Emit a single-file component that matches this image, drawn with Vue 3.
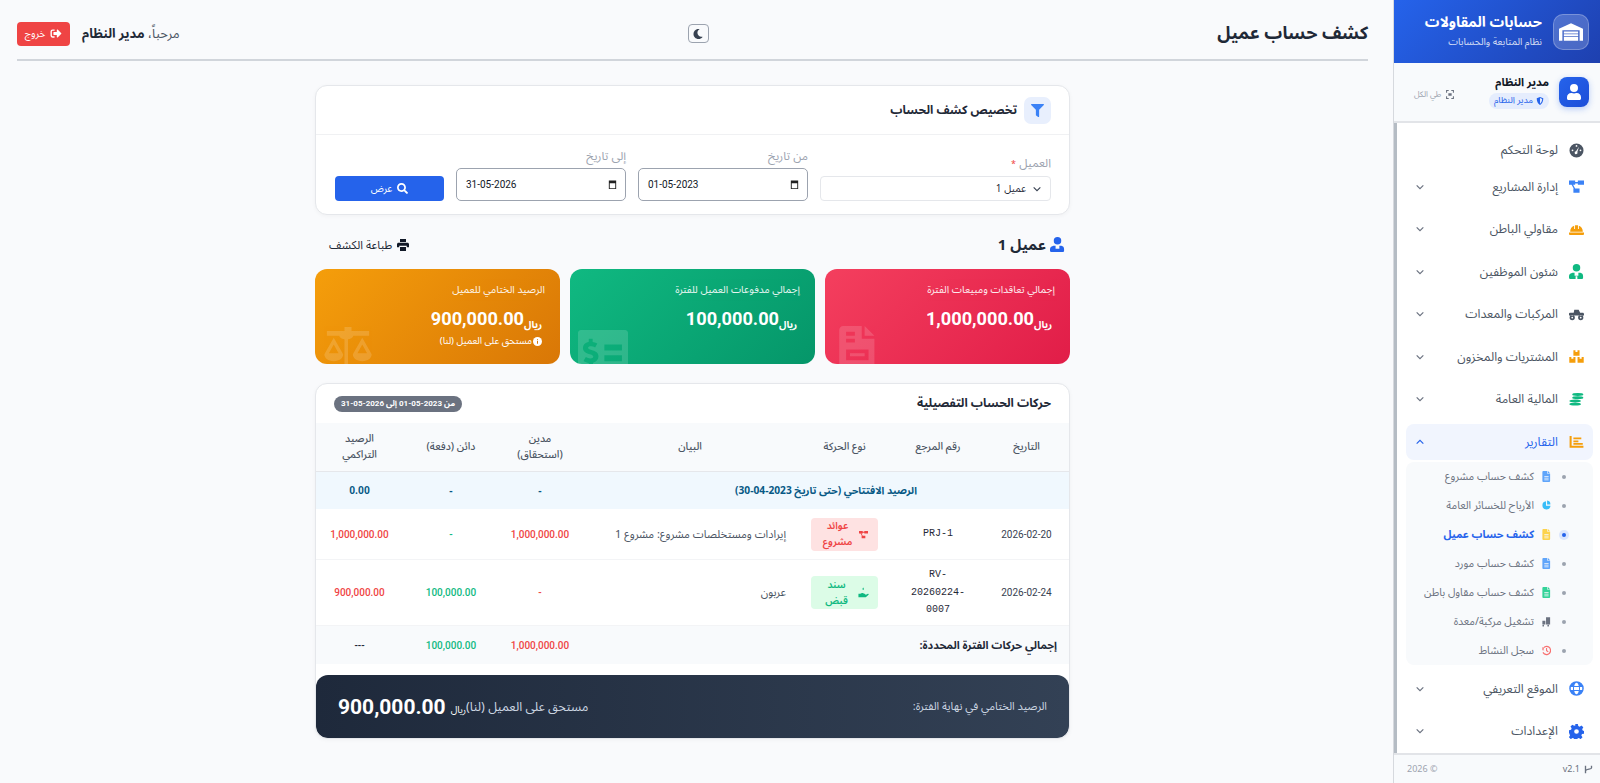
<template>
  <div class="layout">
    <aside class="sidebar">
      <div class="brand">
        <div class="brand-logo">
          <svg viewBox="0 0 640 512" width="24" height="20"><path :d="icons.warehouse" fill="#fff" fill-rule="evenodd" /></svg>
        </div>
        <div class="brand-text">
          <div class="brand-name">حسابات المقاولات</div>
          <div class="brand-sub">نظام المتابعة والحسابات</div>
        </div>
      </div>

      <div class="user-box">
        <div class="avatar">
          <svg viewBox="0 0 448 512" width="14" height="16"><path :d="icons.user" fill="#fff" /></svg>
        </div>
        <div class="user-info">
          <div class="user-name">مدير النظام</div>
          <div class="user-role">
            <svg viewBox="0 0 512 512" width="8" height="8"><path :d="icons.shield" fill="#2563eb" fill-rule="evenodd" /></svg>
            مدير النظام
          </div>
        </div>
        <div class="collapse-all">
          <svg viewBox="0 0 448 512" width="8" height="9"><path :d="icons.compress" fill="#6b7280" /></svg>
          طي الكل
        </div>
      </div>

      <nav class="nav">
        <template v-for="item in navItems" :key="item.label">
          <div class="nav-item" :class="{ active: item.open, plain: !item.arrow }">
            <svg class="nav-icon" viewBox="0 0 512 512"><path :d="icons[item.icon]" :fill="item.color" fill-rule="evenodd" /></svg>
            <span class="nav-label">{{ item.label }}</span>
            <svg v-if="item.arrow" class="nav-arrow" viewBox="0 0 12 12"><path :d="item.open ? 'M2 8l4-4 4 4' : 'M2 4l4 4 4-4'" fill="none" stroke="currentColor" stroke-width="1.4" /></svg>
          </div>
          <div v-if="item.open" class="sub-nav">
            <div v-for="sub in subItems" :key="sub.label" class="sub-item" :class="{ current: sub.current }">
              <span class="sub-dot"></span>
              <svg class="sub-icon" viewBox="0 0 384 512"><path :d="icons[sub.icon]" :fill="sub.color" fill-rule="evenodd" /></svg>
              <span>{{ sub.label }}</span>
            </div>
          </div>
        </template>
      </nav>

      <div class="side-foot">
        <span class="version">
          <svg viewBox="0 0 12 12" width="9" height="9"><path d="M2 1v10M10 1v3c0 2-8 1-8 4" fill="none" stroke="#6b7280" stroke-width="1.8" /></svg>
          v2.1
        </span>
        <span class="copy">© 2026</span>
      </div>
    </aside>

    <main class="main">
      <header class="topbar">
        <h1 class="page-title">كشف حساب عميل</h1>
        <button class="theme-btn">
          <svg viewBox="0 0 512 512" width="10" height="10"><path d="M283 512c79 0 151-36 199-95 7-9-1-22-12-20-127 24-244-73-244-202 0-74 40-142 104-179 10-6 8-21-4-23C180-30 24 100 24 256c0 141 115 256 259 256z" fill="#374151" /></svg>
        </button>
        <div class="welcome">
          <span>مرحباً، <b>مدير النظام</b></span>
          <button class="logout">
            <svg viewBox="0 0 512 512" width="12" height="11"><path d="M502 273L335 440c-15 15-41 4-41-17v-95H159c-13 0-24-11-24-24v-96c0-13 11-24 24-24h135V89c0-21 26-32 41-17l167 167c9 10 9 24 0 34zM192 436v-40c0-7-5-12-12-12H96c-18 0-32-14-32-32V160c0-18 14-32 32-32h84c7 0 12-5 12-12V76c0-7-5-12-12-12H96C43 64 0 107 0 160v192c0 53 43 96 96 96h84c7 0 12-5 12-12z" fill="#fff" /></svg>
            خروج
          </button>
        </div>
      </header>

      <div class="content">
        <section class="card filter-card">
          <div class="filter-head">
            <span class="filter-icon">
              <svg viewBox="0 0 512 512" width="13" height="13"><path d="M488 0H24C3 0-8 26 7 41l185 185v206c0 8 4 15 10 20l80 56c16 11 38 0 38-20V226L505 41c15-15 4-41-17-41z" fill="#3b82f6" /></svg>
            </span>
            <span class="filter-title">تخصيص كشف الحساب</span>
          </div>
          <div class="filter-body">
            <div class="field client-field">
              <label>العميل <i>*</i></label>
              <div class="select-box">
                <span>عميل 1</span>
                <svg viewBox="0 0 12 12" width="10" height="10"><path d="M2 4l4 4 4-4" fill="none" stroke="#374151" stroke-width="1.3" /></svg>
              </div>
            </div>
            <div v-for="d in dateFields" :key="d.label" class="field date-field">
              <label>{{ d.label }}</label>
              <div class="date-box">
                <svg viewBox="0 0 12 12" width="11" height="11"><path d="M2 1.5h8v9.500H2zM3 4.500v5.500h6V4.500z" fill="#222" fill-rule="evenodd" /></svg>
                <span>{{ d.value }}</span>
              </div>
            </div>
            <button class="show-btn">
              <svg viewBox="0 0 512 512" width="11" height="11"><path d="M505 443L405 343c-4-4-11-7-17-7h-16c28-35 44-80 44-128C416 93 323 0 208 0S0 93 0 208s93 208 208 208c48 0 93-16 128-44v16c0 6 3 13 7 17l100 100c9 9 24 9 34 0l28-28c9-10 9-25 0-34zM208 336c-71 0-128-57-128-128S137 80 208 80s128 57 128 128-57 128-128 128z" fill="#fff" /></svg>
              عرض
            </button>
          </div>
        </section>

        <div class="client-row">
          <div class="client-name">
            <svg viewBox="0 0 512 512" width="15" height="15"><path :d="icons.tie" fill="#2563eb" /></svg>
            عميل 1
          </div>
          <div class="print-btn">
            <svg viewBox="0 0 512 512" width="12" height="12"><path d="M128 0h256v128H128zM64 160h384c35 0 64 29 64 64v128h-96v-64H96v64H0V224c0-35 29-64 64-64zM128 336h256v176H128z" fill="#111827" /></svg>
            طباعة الكشف
          </div>
        </div>

        <div class="stats">
          <div v-for="s in stats" :key="s.title" class="stat" :class="s.cls">
            <div class="stat-title">{{ s.title }}</div>
            <div class="stat-value"><small>ريال</small>{{ s.value }}</div>
            <div v-if="s.note" class="stat-note">
              <svg viewBox="0 0 12 12" width="9" height="9"><circle cx="6" cy="6" r="6" fill="#fff" /><path d="M6 5v4M6 3v1" stroke="#d97706" stroke-width="1.4" /></svg>
              {{ s.note }}
            </div>
            <svg class="stat-bg" :viewBox="s.box"><path :d="icons[s.icon]" fill="#fff" fill-rule="evenodd" /></svg>
          </div>
        </div>

        <section class="card table-card">
          <div class="table-head">
            <span class="table-title">حركات الحساب التفصيلية</span>
            <span class="range-badge">من 2023-05-01 إلى 2026-05-31</span>
          </div>
          <table class="ledger">
            <colgroup>
              <col v-for="(w, i) in colWidths" :key="i" :style="{ width: w + 'px' }" />
            </colgroup>
            <thead>
              <tr>
                <th>التاريخ</th>
                <th>رقم المرجع</th>
                <th>نوع الحركة</th>
                <th>البيان</th>
                <th>مدين<br />(استحقاق)</th>
                <th>دائن (دفعة)</th>
                <th>الرصيد<br />التراكمي</th>
              </tr>
            </thead>
            <tbody>
              <tr class="opening">
                <td colspan="4">الرصيد الافتتاحي (حتى تاريخ 2023-04-30)</td>
                <td>-</td>
                <td>-</td>
                <td class="open-balance">0.00</td>
              </tr>
              <tr>
                <td class="date">2026-02-20</td>
                <td class="ref">PRJ-1</td>
                <td>
                  <span class="type-badge red">
                    <svg viewBox="0 0 512 512" width="9" height="9"><path :d="icons.diagram" fill="#ef4444" /></svg>
                    <span>عوائد مشروع</span>
                  </span>
                </td>
                <td class="desc">إيرادات ومستخلصات مشروع: مشروع 1</td>
                <td class="num red-text">1,000,000.00</td>
                <td class="num green-text">-</td>
                <td class="num red-text">1,000,000.00</td>
              </tr>
              <tr class="tall">
                <td class="date">2026-02-24</td>
                <td class="ref">RV-<br />20260224-<br />0007</td>
                <td>
                  <span class="type-badge green">
                    <svg viewBox="0 0 512 512" width="11" height="11"><path :d="icons.hand" fill="#10b981" /></svg>
                    <span>سند قبض</span>
                  </span>
                </td>
                <td class="desc">عربون</td>
                <td class="num red-text">-</td>
                <td class="num green-text">100,000.00</td>
                <td class="num red-text">900,000.00</td>
              </tr>
              <tr class="totals">
                <td colspan="4">إجمالي حركات الفترة المحددة:</td>
                <td class="num red-text">1,000,000.00</td>
                <td class="num green-text">100,000.00</td>
                <td class="num dark">---</td>
              </tr>
            </tbody>
          </table>
          <div class="closing">
            <span class="closing-label">الرصيد الختامي في نهاية الفترة:</span>
            <div class="closing-right">
              <span class="closing-note">مستحق على العميل (لنا)</span>
              <small>ريال</small>
              <b>900,000.00</b>
            </div>
          </div>
        </section>
      </div>
    </main>
  </div>
</template>

<script setup>
// Hand-drawn approximations of the icons in the screenshot
const icons = {
  warehouse:
    "M0 170L320 20l320 150v320h-90V210H90v280H0zM130 240h380v55H130zM130 315h380v55H130zM130 390h380v100H130z",
  user: "M224 256a128 128 0 100-256 128 128 0 000 256zM314 288h-17c-22 10-47 16-73 16s-51-6-73-16h-17C60 288 0 348 0 422v42c0 26 22 48 48 48h352c26 0 48-22 48-48v-42c0-74-60-134-134-134z",
  shield: "M256 0l210 85c0 180-60 340-210 427C106 425 46 265 46 85zM256 70v360c90-70 130-170 136-295z",
  compress: "M0 0h150v60H60v90H0zM298 0h150v150h-60V60h-90zM0 512h150v-60H60v-90H0zM298 512h150V362h-60v90h-90zM130 180h188v152H130z",
  gauge:
    "M256 16a240 240 0 110 480 240 240 0 010-480zM256 70a30 30 0 100 60 30 30 0 000-60zM120 220a30 30 0 100 60 30 30 0 000-60zM392 220a30 30 0 100 60 30 30 0 000-60zM340 130L240 280a50 50 0 1045 25z",
  diagram: "M0 50h210v150H0zM302 50h210v150H302zM150 320h210v150H150zM210 100h92v50h-92zM90 200h50l70 120h-50z",
  hat: "M40 330c0-110 60-180 136-200v110h30V110h100v130h30V130c76 20 136 90 136 200zM0 360h512v50c0 20-15 30-30 30H30c-15 0-30-10-30-30z",
  tie: "M256 256a128 128 0 100-256 128 128 0 000 256zM120 300h70v100h130V300h70c55 10 90 50 90 110v70c0 18-14 32-32 32H32c-18 0-32-14-32-32v-70c0-60 65-100 120-110zM225 420h60v92h-60z",
  truck:
    "M180 90h150l50 110h90c20 0 42 20 42 50v40H0v-50c0-30 20-40 50-40h110zM110 270a90 90 0 110 180 90 90 0 010-180zM110 330a30 30 0 100 60 30 30 0 000-60zM400 270a90 90 0 110 180 90 90 0 010-180zM400 330a30 30 0 100 60 30 30 0 000-60z",
  boxes:
    "M150 40h70v60h70V40h70v190H150zM10 270h70v60h70v-60h70v200H10zM292 270h70v60h70v-60h70v200H292z",
  coins:
    "M110 85a190 50 0 10380 0a190 50 0 10-380 0zM110 195a190 50 0 10380 0a190 50 0 10-380 0zM10 305a200 50 0 10400 0a200 50 0 10-400 0zM10 415a200 50 0 10400 0a200 50 0 10-400 0z",
  report: "M20 70h70v330h402v70H20zM150 120h270v60H150zM150 220h170v60H150zM150 310h320v60H150z",
  globe:
    "M256 8a248 248 0 110 496 248 248 0 010-496zM180 170h152c-10-60-40-110-76-110s-66 50-76 110zM170 256c0 20 1 40 3 55h166c2-15 3-35 3-55s-1-30-3-50H173c-2 20-3 30-3 50zM180 342c10 60 40 110 76 110s66-50 76-110zM65 206c-3 15-5 30-5 50s2 40 5 55h75c-2-15-3-35-3-55s1-35 3-50zM372 206c2 15 3 30 3 50s-1 40-3 55h75c3-15 5-35 5-55s-2-35-5-50z",
  gear:
    "M210 0h92l14 70 48 20 60-40 65 65-40 60 20 48 43 15v92l-70 14-20 48 40 60-65 65-60-40-48 20-14 70h-92l-14-70-48-20-60 40-65-65 40-60-20-48L0 302v-92l70-14 20-48-40-60 65-65 60 40 48-20zM256 176a80 80 0 100 160 80 80 0 000-160z",
  hand: "M240 20c40 30 30 60 30 90s-50 40-60 0c-5-30 10-60 30-90zM20 310h90c40-30 90-40 130-20l90 30c30 15 15 60-20 50l-60-15 120 10 90-50c30-15 55 20 30 45l-100 90c-20 15-40 30-80 30H20z",
  doc: "M40 0h190v130h130v340c0 24-18 42-40 42H40c-22 0-40-18-40-42V42C0 18 18 0 40 0zM260 0l100 100H260zM90 230h200v40H90zM90 310h200v40H90zM90 390h200v40H90z",
  dollarDoc:
    "M30 40h452c16 0 30 14 30 30v372c0 16-14 30-30 30H30c-16 0-30-14-30-30V70c0-16 14-30 30-30zM110 130v32c-40 8-60 34-60 64 0 40 40 56 70 64 30 8 36 16 36 26s-14 16-30 16-30-6-46-14l-24 40c20 12 34 18 54 20v32h44v-34c36-8 56-34 56-66 0-40-36-54-70-64-26-8-36-14-36-24 0-8 10-14 28-14 16 0 28 4 44 12l22-40c-16-10-30-14-48-16v-34zM270 190h180v60H270zM270 300h180v60H270z",
  scale:
    "M220 10h72v40h180v50H310c-6 20-20 30-54 36v316H220V136c-34-6-48-16-54-36H40V50h180zM110 120l96 170c0 40-40 70-96 70S14 330 14 290zM110 190l-50 90h100zM402 120l96 170c0 40-40 70-96 70s-96-30-96-70zM402 190l-50 90h100z",
  invoice:
    "M40 0h190v130h130v340c0 24-18 42-40 42H40c-22 0-40-18-40-42V42C0 18 18 0 40 0zM260 0l100 100H260zM70 60v40h90V60zM70 130v40h90v-40zM70 240v110h230V240zM110 280h150v30H110zM200 400v40h90v-40z",
  pie: "M170 60v210h210a190 190 0 11-210-210zM220 20a170 170 0 01150 190H220z",
  truckSmall: "M170 60h190v340H170zM0 220h140v180H0zM40 410a40 40 0 110 80 40 40 0 010-80zM270 410a40 40 0 110 80 40 40 0 010-80z",
  history: "M192 40a216 216 0 11-190 320l50-30a160 160 0 10-10-130l50 50H0V90l40 40A215 215 0 01192 40zM170 140h50v110l70 50-30 40-90-65z",
};

const navItems = [
  { label: "لوحة التحكم", icon: "gauge", color: "#4b5563" },
  { label: "إدارة المشاريع", icon: "diagram", color: "#3b82f6", arrow: true },
  { label: "مقاولي الباطن", icon: "hat", color: "#f59e0b", arrow: true },
  { label: "شئون الموظفين", icon: "tie", color: "#10b981", arrow: true },
  { label: "المركبات والمعدات", icon: "truck", color: "#4b5563", arrow: true },
  { label: "المشتريات والمخزون", icon: "boxes", color: "#f59e0b", arrow: true },
  { label: "المالية العامة", icon: "coins", color: "#10b981", arrow: true },
  { label: "التقارير", icon: "report", color: "#f59e0b", arrow: true, open: true },
  { label: "الموقع التعريفي", icon: "globe", color: "#3b82f6", arrow: true },
  { label: "الإعدادات", icon: "gear", color: "#2563eb", arrow: true },
];

const subItems = [
  { label: "كشف حساب مشروع", icon: "doc", color: "#60a5fa" },
  { label: "الأرباح للخسائر العامة", icon: "pie", color: "#38bdf8" },
  { label: "كشف حساب عميل", icon: "doc", color: "#fcd34d", current: true },
  { label: "كشف حساب مورد", icon: "doc", color: "#60a5fa" },
  { label: "كشف حساب مقاول باطن", icon: "doc", color: "#34d399" },
  { label: "تشغيل مركبة/معدة", icon: "truckSmall", color: "#6b7280" },
  { label: "سجل النشاط", icon: "history", color: "#f87171" },
];

const dateFields = [
  { label: "من تاريخ", value: "01-05-2023" },
  { label: "إلى تاريخ", value: "31-05-2026" },
];

const stats = [
  { title: "إجمالي تعاقدات ومبيعات الفترة", value: "1,000,000.00", cls: "rose", icon: "invoice", box: "0 0 384 512" },
  { title: "إجمالي مدفوعات العميل للفترة", value: "100,000.00", cls: "emerald", icon: "dollarDoc", box: "0 0 512 512" },
  { title: "الرصيد الختامي للعميل", value: "900,000.00", cls: "amber", icon: "scale", box: "0 0 512 512", note: "مستحق على العميل (لنا)" },
];

const colWidths = [85, 92, 95, 214, 86, 92, 91];
</script>

<style>
html,
body {
  margin: 0;
  background: #f8fafc;
}
</style>

<style scoped>
.layout {
  direction: rtl;
  display: flex;
  height: 783px;
  overflow: hidden;
  background: #f9fafc;
  font-family: "Noto Sans Arabic", Inter, "DejaVu Sans", sans-serif;
  color: #1f2937;
}

/* sidebar */
.sidebar {
  width: 207px;
  flex: none;
  display: flex;
  flex-direction: column;
  background: #fff;
  border-left: 1px solid #d6d9de;
  box-sizing: border-box;
}
.brand {
  height: 63px;
  flex: none;
  box-sizing: border-box;
  display: flex;
  align-items: center;
  gap: 11px;
  padding: 0 11px;
  background: linear-gradient(135deg, #2563eb, #1e40af);
  color: #fff;
}
.brand-logo {
  width: 36px;
  height: 36px;
  border-radius: 10px;
  background: rgba(255, 255, 255, 0.2);
  border: 1px solid rgba(255, 255, 255, 0.25);
  box-sizing: border-box;
  display: flex;
  align-items: center;
  justify-content: center;
}
.brand-name {
  font-size: 14.5px;
  font-weight: 700;
  line-height: 20px;
}
.brand-sub {
  font-size: 9.8px;
  opacity: 0.8;
  line-height: 16px;
  margin-top: 1px;
}
.user-box {
  height: 60px;
  flex: none;
  box-sizing: border-box;
  display: flex;
  align-items: center;
  gap: 10px;
  padding: 0 11px;
  background: #f8fafc;
  border-bottom: 2px solid #e2e4e8;
}
.avatar {
  width: 30px;
  height: 30px;
  border-radius: 8px;
  background: linear-gradient(135deg, #2563eb, #1d4ed8);
  box-shadow: 0 2px 6px rgba(37, 99, 235, 0.3);
  display: flex;
  align-items: center;
  justify-content: center;
}
.user-name {
  font-size: 11.2px;
  font-weight: 700;
  color: #111827;
  line-height: 15px;
}
.user-role {
  margin-top: 3px;
  display: flex;
  width: fit-content;
  align-items: center;
  gap: 3px;
  padding: 1px 5px;
  border-radius: 10px;
  background: #e5edfd;
  color: #2563eb;
  font-size: 9px;
  line-height: 14px;
}
.collapse-all {
  margin-right: auto;
  margin-left: 9px;
  margin-top: 5px;
  display: flex;
  align-items: center;
  gap: 5px;
  font-size: 8px;
  color: #9ca3af;
}
.nav {
  flex: 1;
  padding: 12px 7px 0 9px;
  border-left: 3px solid #b5bcc4;
  min-height: 0;
  overflow: hidden;
}
.nav-item {
  height: 35.5px;
  margin-bottom: 7px;
  display: flex;
  align-items: center;
  gap: 11px;
  padding: 0 9px;
  font-size: 12.3px;
  color: #4b5563;
  border-radius: 8px;
  box-sizing: border-box;
}
.nav-item.plain {
  height: 30px;
  margin-bottom: 4px;
}
.nav-item.active {
  background: #f1f5fe;
  color: #2563eb;
  margin-bottom: 2.5px;
}
.nav-icon {
  width: 15px;
  height: 15px;
  flex: none;
}
.nav-arrow {
  margin-right: auto;
  width: 10px;
  height: 10px;
  color: #6b7280;
}
.nav-item.active .nav-arrow {
  color: #2563eb;
}
.sub-nav {
  background: #f8fafc;
  border-radius: 8px;
  margin-bottom: 6px;
}
.sub-item {
  height: 29px;
  display: flex;
  align-items: center;
  padding-right: 27px;
  font-size: 10.7px;
  color: #6b7280;
  gap: 8px;
}
.sub-item.current {
  color: #2563eb;
  font-weight: 700;
}
.sub-dot {
  width: 4px;
  height: 4px;
  border-radius: 50%;
  background: #9ca3af;
  margin-left: 3px;
  flex: none;
}
.sub-item.current .sub-dot {
  background: #2563eb;
  box-shadow: 0 0 0 3px #dbe6fd;
}
.sub-icon {
  width: 9px;
  height: 11px;
  flex: none;
}
.side-foot {
  height: 30px;
  flex: none;
  border-top: 2px solid #e2e4e8;
  background: #f8fafc;
  display: flex;
  align-items: center;
  justify-content: space-between;
  padding: 0 7px 0 13px;
  font-size: 9px;
  color: #9ca3af;
  box-sizing: border-box;
}
.version {
  display: flex;
  align-items: center;
  gap: 4px;
  color: #6b7280;
}

/* main */
.main {
  flex: 1;
  min-width: 0;
  padding: 0 25px 0 0;
  margin-left: 17px;
}
.topbar {
  height: 61px;
  box-sizing: border-box;
  padding-top: 8px;
  border-bottom: 2px solid #d1d5db;
  display: flex;
  align-items: center;
  justify-content: space-between;
}
.page-title {
  margin: 0;
  font-size: 17.8px;
  font-weight: 700;
  color: #1f2937;
}
.theme-btn {
  width: 21px;
  height: 19px;
  padding: 0;
  border: 1px solid #9ca3af;
  border-radius: 4px;
  background: transparent;
  display: flex;
  align-items: center;
  justify-content: center;
}
.welcome {
  display: flex;
  align-items: center;
  gap: 12px;
  font-size: 13px;
  color: #4b5563;
  font-family: inherit;
}
.welcome b {
  color: #1f2937;
}
.logout {
  height: 24px;
  width: 53px;
  padding: 0;
  border: 0;
  border-radius: 4px;
  background: #ef4444;
  color: #fff;
  font: inherit;
  font-size: 10px;
  display: flex;
  align-items: center;
  justify-content: center;
  gap: 5px;
}
.content {
  width: 755px;
  margin: 24px auto 0;
}
.card {
  background: #fff;
  border-radius: 12px;
  border: 1px solid #e5e7eb;
  box-shadow: 0 1px 4px rgba(0, 0, 0, 0.04);
  box-sizing: border-box;
}
.filter-card {
  height: 130px;
}
.filter-head {
  height: 49px;
  box-sizing: border-box;
  border-bottom: 1px solid #f0f1f3;
  display: flex;
  align-items: center;
  gap: 7px;
  padding: 0 18px;
}
.filter-icon {
  width: 27px;
  height: 27px;
  border-radius: 7px;
  background: #e8effd;
  display: flex;
  align-items: center;
  justify-content: center;
}
.filter-title {
  font-size: 12px;
  font-weight: 700;
  color: #1f2937;
}
.filter-body {
  display: flex;
  align-items: flex-end;
  padding: 0 18px 2px;
  height: 66px;
  gap: 12px;
}
.field label {
  display: block;
  font-size: 11.8px;
  line-height: 16px;
  color: #9ca3af;
  margin-bottom: 3px;
}
.field i {
  color: #ef4444;
  font-style: normal;
  font-size: 9px;
}
.client-field {
  width: 231px;
}
.date-field {
  width: 170px;
}
.select-box {
  height: 25px;
  border: 1px solid #e5e7eb;
  border-radius: 4px;
  display: flex;
  align-items: center;
  gap: 6px;
  padding: 0 8px;
  font-size: 10px;
  box-sizing: border-box;
  justify-content: flex-start;
  direction: rtl;
}
.select-box svg {
  order: -1;
}
.date-box {
  height: 33px;
  box-sizing: border-box;
  border: 1px solid #9ca3af;
  border-radius: 5px;
  display: flex;
  align-items: center;
  justify-content: space-between;
  padding: 0 7px 0 9px;
  font-family: Roboto, sans-serif;
  font-size: 10px;
  color: #111827;
}
.show-btn {
  width: 109px;
  height: 25px;
  padding: 0;
  border: 0;
  border-radius: 4px;
  background: #2563eb;
  color: #fff;
  font: inherit;
  font-size: 10px;
  display: flex;
  align-items: center;
  justify-content: center;
  gap: 5px;
}
.client-row {
  display: flex;
  align-items: center;
  justify-content: space-between;
  height: 54px;
  box-sizing: border-box;
  padding: 5px 5px 0 14px;
}
.client-name {
  display: flex;
  align-items: center;
  gap: 4px;
  font-size: 15px;
  font-weight: 700;
  color: #1f2937;
}
.print-btn {
  display: flex;
  align-items: center;
  gap: 5px;
  font-size: 11.5px;
  color: #1f2937;
}
.stats {
  display: flex;
  gap: 10px;
}
.stat {
  position: relative;
  flex: 1;
  height: 95px;
  border-radius: 12px;
  color: #fff;
  padding: 14px 15px;
  box-sizing: border-box;
  overflow: hidden;
}
.stat.rose {
  background: linear-gradient(135deg, #f43f5e, #e11d48);
}
.stat.emerald {
  background: linear-gradient(135deg, #10b981, #059669);
}
.stat.amber {
  background: linear-gradient(135deg, #f59e0b, #d97706);
}
.stat-title {
  font-size: 10.3px;
  opacity: 0.9;
  line-height: 14px;
}
.stat-value {
  margin-top: 9px;
  font-family: Roboto, sans-serif;
  font-size: 18.2px;
  font-weight: 700;
  line-height: 26px;
  display: flex;
  align-items: baseline;
}
.stat-value small {
  font-family: "Noto Sans Arabic", "DejaVu Sans", sans-serif;
  font-size: 10px;
  margin-right: 3px;
  position: relative;
  top: 3px;
}
.stat-note {
  margin-top: 0;
  padding-right: 3px;
  font-size: 9.5px;
  line-height: 12px;
  display: flex;
  align-items: center;
  gap: 1px;
}
.stat-bg {
  position: absolute;
  left: 8px;
  bottom: -12px;
  width: 50px;
  height: 50px;
  opacity: 0.15;
}
.table-card {
  margin-top: 19px;
  overflow: hidden;
}
.table-head {
  height: 39px;
  display: flex;
  align-items: center;
  justify-content: space-between;
  padding: 0 18px;
}
.table-title {
  font-size: 12px;
  font-weight: 700;
  color: #1f2937;
}
.range-badge {
  background: #6b7280;
  color: #fff;
  font-size: 8px;
  font-weight: 700;
  padding: 1px 7px;
  border-radius: 9px;
  line-height: 14px;
  font-family: Roboto, "Noto Sans Arabic", "DejaVu Sans", sans-serif;
}
.ledger {
  width: 100%;
  border-collapse: collapse;
  table-layout: fixed;
  font-size: 10px;
  text-align: center;
}
.ledger th {
  height: 48px;
  background: #f8fafc;
  border-bottom: 1px solid #e5e7eb;
  font-size: 10.5px;
  font-weight: 500;
  color: #4b5563;
  line-height: 16px;
  padding: 0 4px;
}
.ledger td {
  padding: 0 12px;
  border-bottom: 1px solid #f3f4f6;
  height: 50px;
}
.ledger .tall td {
  height: 65px;
}
.ledger .opening td {
  height: 37px;
  background: #f0f8fe;
  color: #075985;
  font-weight: 700;
  font-size: 10.2px;
  border-bottom: 0;
}
.ledger .open-balance {
  font-family: Roboto, sans-serif;
  font-size: 12px;
}
.date {
  font-family: Roboto, sans-serif;
  color: #374151;
}
.ref {
  direction: ltr;
  font-family: "Liberation Mono", monospace;
  font-size: 10px;
  line-height: 17.5px;
  color: #1f2937;
}
.ledger td.ref {
  padding: 0 4px;
}
.ledger td.desc {
  color: #4b5563;
  white-space: nowrap;
  text-align: right;
  font-size: 11px;
  padding-right: 11px;
  padding-left: 0;
}
.num {
  font-family: Roboto, sans-serif;
  font-weight: 500;
}
.red-text {
  color: #ef4444;
}
.green-text {
  color: #10b981;
}
.dark {
  color: #1f2937;
}
.type-badge {
  display: inline-flex;
  align-items: center;
  justify-content: center;
  gap: 5px;
  width: 67px;
  height: 33px;
  box-sizing: border-box;
  border-radius: 4px;
  font-size: 10px;
  line-height: 16px;
  font-weight: 600;
  text-align: center;
  vertical-align: middle;
}
.type-badge span {
  width: 32px;
}
.type-badge svg {
  flex: none;
}
.type-badge.red {
  background: #fee2e2;
  color: #ef4444;
}
.type-badge.green {
  background: #dcfce7;
  color: #10b981;
}
.ledger .totals td {
  height: 38px;
  background: #f8fafc;
  border-bottom: 0;
}
.ledger .totals td:first-child {
  text-align: right;
  font-weight: 700;
  font-size: 10.9px;
  color: #1f2937;
}
.closing {
  margin-top: 11px;
  height: 63px;
  border-radius: 12px;
  background: linear-gradient(90deg, #1e293b, #334155);
  color: #fff;
  display: flex;
  align-items: center;
  justify-content: space-between;
  padding: 0 22px;
}
.closing-label {
  font-size: 11px;
  color: #cbd5e1;
}
.closing-right {
  display: flex;
  align-items: center;
}
.closing-note {
  font-size: 12.6px;
  color: #cbd5e1;
}
.closing-right small {
  font-size: 9.5px;
  margin-left: 5px;
  align-self: flex-end;
}
.closing-right b {
  font-family: Roboto, sans-serif;
  font-size: 21px;
}
</style>
